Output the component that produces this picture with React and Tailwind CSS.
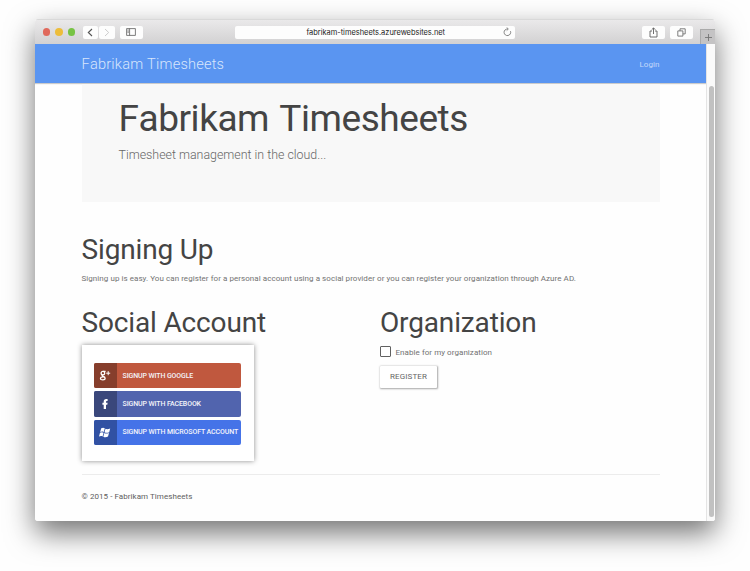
import React from "react";

const roboto = "font-['Roboto',sans-serif]";

function Toolbar() {
  return (
    <div className="flex h-[25px] shrink-0 items-center border-t border-[#d9d9d9] bg-linear-to-b from-[#eae9ea] to-[#d2d1d2] pl-[7.5px]">
      <div className="flex gap-[5px]">
        <span className="size-[7.5px] rounded-full bg-[#e0695c]" />
        <span className="size-[7.5px] rounded-full bg-[#edbd3a]" />
        <span className="size-[7.5px] rounded-full bg-[#77c344]" />
      </div>
      <div className="ml-[7.5px] flex gap-px">
        <span className="flex h-[13px] w-[15.5px] items-center justify-center rounded-[2px] bg-[#fdfdfd]">
          <svg width="6" height="9" viewBox="0 0 6 9" fill="none" stroke="#555" strokeWidth="1.1"><path d="M5 1 1.3 4.5 5 8" /></svg>
        </span>
        <span className="flex h-[13px] w-[15.5px] items-center justify-center rounded-[2px] bg-[#fdfdfd]">
          <svg width="6" height="9" viewBox="0 0 6 9" fill="none" stroke="#ccc" strokeWidth="1"><path d="M1 1 4.7 4.5 1 8" /></svg>
        </span>
      </div>
      <span className="ml-[5px] flex h-[13px] w-[23px] items-center justify-center rounded-[2px] bg-[#fdfdfd]">
        <svg width="10" height="8" viewBox="0 0 10 8" fill="none" stroke="#5c5c5c" strokeWidth=".8"><path d="M.6.6h8.8v6.8H.6zM3.6.6v6.8M1.5 2h1.2M1.5 3.3h1.2M1.5 4.6h1.2" /></svg>
      </span>
      <div className="ml-[92.5px] flex h-[13px] w-[279.5px] items-center rounded-[2px] bg-[#fdfdfd] pr-[3px]">
        <span className="ml-[71.5px] w-[138px] whitespace-nowrap font-['Inter',sans-serif] text-[7.5px] leading-[13px] tracking-[-0.04px] text-[#222]">fabrikam-timesheets.azurewebsites.net</span>
        <svg className="ml-auto" width="9" height="10" viewBox="0 0 9 10" fill="none" stroke="#777" strokeWidth=".9"><path d="M7.5 4.2A3.3 3.3 0 1 1 4.6 2M3.7.5 5.3 2 3.7 3.6" /></svg>
      </div>
      <span className="ml-[127px] flex h-[13px] w-[23px] items-center justify-center rounded-[2px] bg-[#fdfdfd]">
        <svg width="9" height="11" viewBox="0 0 9 11" fill="none" stroke="#606060" strokeWidth=".9"><path d="M3 4H1v6h7V4H6M4.5 7V1M2.7 2.7 4.5.9l1.8 1.8" /></svg>
      </span>
      <span className="ml-[5px] flex h-[13px] w-[23px] items-center justify-center rounded-[2px] bg-[#fdfdfd]">
        <svg width="9" height="9" viewBox="0 0 9 9" fill="none" stroke="#707070" strokeWidth=".9"><path d="M.8 2.9h5.1v5.2H.8zM3 2.9V.8h5.2v5.1H5.9" /></svg>
      </span>
      <span className="ml-auto flex h-[15px] w-[15px] items-center justify-center self-end border-l border-t border-[#aaa] bg-[#c4c3c4]">
        <svg width="7" height="7" viewBox="0 0 7 7" stroke="#757575" strokeWidth=".9"><path d="M3.5 0v7M0 3.5h7" /></svg>
      </span>
    </div>
  );
}

function GoogleIcon() {
  return (
    <svg width="12" height="12" viewBox="0 0 12 12" fill="none" stroke="#fff" strokeWidth="1.3">
      <ellipse cx="3.9" cy="3.2" rx="1.8" ry="1.8" />
      <path d="M3.9 1.3h2.7M3.7 5c-1 .7-.5 1.3.4 1.5 1.2.2 2 .8 2 1.8 0 1-1 1.6-2.3 1.6-1.4 0-2.3-.5-2.3-1.5s1-1.6 2.6-1.6" />
      <path d="M9.2 1.2v4M7.2 3.2h4" strokeWidth="1" />
    </svg>
  );
}

function FacebookIcon() {
  return (
    <svg width="12" height="12" viewBox="0 0 12 12" fill="#fff"><path d="M4.7 11V6.7H3.4V4.8h1.3V3.6c0-1.6.9-2.5 2.5-2.5h1.4v2h-.8c-.6 0-.8.2-.8.7v1h1.6l-.3 1.9H7V11z" /></svg>
  );
}

function WindowsIcon() {
  return (
    <svg width="12" height="11" viewBox="0 0 12 11" fill="#fff">
      <path d="M2.2 1.3c1.3-.7 2.5-.7 3.6 0l-1 3.7c-1.1-.7-2.3-.6-3.6 0zM6.5 1.7c1.2.7 2.5.6 4.7-.2l-1 3.7c-1.6.8-3.3.9-4.7.1zM1 5.7c1.3-.7 2.5-.7 3.6 0l-1 3.7c-1.1-.7-2.3-.6-3.6 0zM5.3 6.1c1.3.7 2.8.7 4.7-.2L9 9.6c-1.6.8-3.3.9-4.7.1z" />
    </svg>
  );
}

const providers = [
  { name: "SIGNUP WITH GOOGLE", icon: <GoogleIcon />, body: "bg-[#c0583e]", side: "bg-[#863e2c]" },
  { name: "SIGNUP WITH FACEBOOK", icon: <FacebookIcon />, body: "bg-[#5164ae]", side: "bg-[#3a477b]" },
  { name: "SIGNUP WITH MICROSOFT ACCOUNT", icon: <WindowsIcon />, body: "bg-[#4573e8]", side: "bg-[#3151a3]" },
];

export default function App() {
  return (
    <div className={`h-[571px] w-[750px] overflow-hidden bg-[#fefefe] pl-[35px] pt-[19px] ${roboto}`}>
      <div className="h-[502px] w-[680px] rounded-[3px] shadow-[0_12px_29px_rgba(0,0,0,0.55)]">
        <div className="flex h-full flex-col overflow-hidden rounded-[3px] bg-[#fefefe]">
          <Toolbar />
          <div className="flex min-h-0 flex-1">
            <div className="flex w-[671px] flex-col">
              <header className="flex h-[39px] shrink-0 items-center justify-between bg-[#5a95f1] pl-[46.5px] pr-[46.5px] shadow-[0_1px_1px_rgba(0,0,0,0.2)]">
                <span className="mt-[2px] whitespace-nowrap text-[14.6px] font-light tracking-[0.2px] text-[#d8e6fc] [font-kerning:none]">Fabrikam Timesheets</span>
                <span className="mt-[2px] text-[8px] tracking-[0.05px] text-[#c4d9fb]">Login</span>
              </header>
              <main className="ml-[46.5px] mt-px w-[578.5px] text-[#444]">
                <section className="h-[118px] bg-[#f8f8f8] pl-[37px] pt-[12px]">
                  <h1 className="h-[46px] whitespace-nowrap text-[37px] leading-[46px] tracking-[-0.45px] [font-kerning:none] [word-spacing:1.5px]">Fabrikam Timesheets</h1>
                  <p className="mt-[4px] h-[18px] whitespace-nowrap text-[12.4px] font-light leading-[18px] text-[#666]">Timesheet management in the cloud...</p>
                </section>
                <h2 className="mt-[30px] h-[36px] whitespace-nowrap text-[28px] leading-[36px] tracking-[-0.15px]">Signing Up</h2>
                <p className="mt-[5px] h-[12px] whitespace-nowrap text-[8px] leading-[12px] tracking-[0.058px] text-[#727272]">Signing up is easy. You can register for a personal account using a social provider or you can register your organization through Azure AD.</p>
                <div className="mt-[20px] flex">
                  <section className="w-[298.5px]">
                    <h2 className="h-[36px] whitespace-nowrap text-[28px] leading-[36px] tracking-[-0.15px]">Social Account</h2>
                    <div className="mt-[4px] flex h-[115.5px] w-[172.5px] flex-col gap-[3px] bg-white pl-[12px] pt-[18px] shadow-[0_0_5px_rgba(0,0,0,0.45)]">
                      {providers.map((p) => (
                        <button key={p.name} className={`flex h-[25.3px] w-[147.5px] items-stretch overflow-hidden rounded-[2px] ${p.body}`}>
                          <span className={`flex w-[23.5px] items-center justify-center ${p.side}`}>{p.icon}</span>
                          <span className="ml-[5.5px] mt-px self-center whitespace-nowrap text-[7px] font-medium tracking-[-0.11px] text-[#f4f4fa]">{p.name}</span>
                        </button>
                      ))}
                    </div>
                  </section>
                  <section>
                    <h2 className="h-[36px] whitespace-nowrap text-[28px] leading-[36px] tracking-[-0.15px]">Organization</h2>
                    <label className="mt-[4px] flex h-[14px] items-center">
                      <span className="mb-px size-[11px] rounded-[1px] border-[1.5px] border-[#606060]" />
                      <span className="ml-[4.5px] mt-px whitespace-nowrap text-[8px] tracking-[0.058px] text-[#727272]">Enable for my organization</span>
                    </label>
                    <button className="mt-[7px] flex h-[22px] w-[57px] items-center justify-center rounded-[1px] bg-white text-[8px] tracking-[0.1px] text-[#666] shadow-[0.5px_0.5px_2px_rgba(0,0,0,0.35)]">REGISTER</button>
                  </section>
                </div>
                <hr className="mt-[13px] border-t border-[#ececec]" />
                <footer className="mt-[16px] h-[12px] whitespace-nowrap text-[8px] leading-[12px] tracking-[0.058px] text-[#606060]">© 2015 - Fabrikam Timesheets</footer>
              </main>
            </div>
            <div className="flex w-[9px] justify-center border-l border-[#e4e4e4] bg-[#fafafa] pb-[4px] pt-[42px]">
              <span className="w-[5px] rounded-full bg-[#c1c1c1]" />
            </div>
          </div>
        </div>
      </div>
    </div>
  );
}
